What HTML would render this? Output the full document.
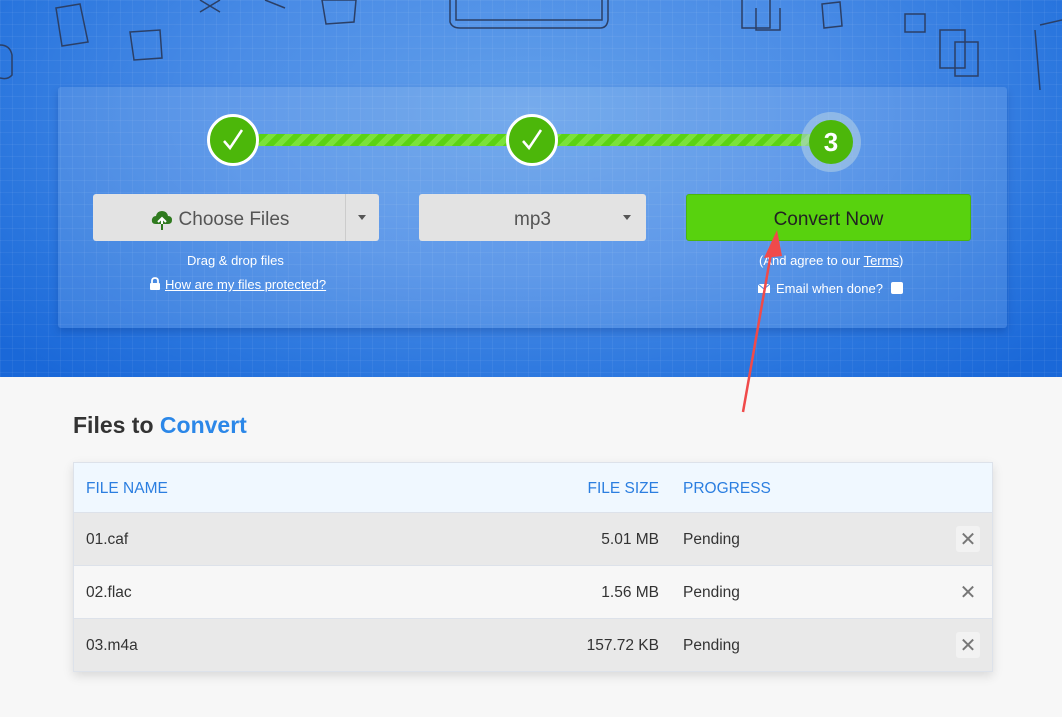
<!DOCTYPE html>
<html><head><meta charset="utf-8"><style>
*{margin:0;padding:0;box-sizing:border-box}
body{width:1062px;height:717px;overflow:hidden;background:#f7f7f7;font-family:"Liberation Sans",sans-serif;position:relative}
.hero{position:absolute;left:0;top:0;width:1062px;height:377px;background:radial-gradient(ellipse 700px 360px at 531px 110px,#63a0ea 0%,#4a8ce6 45%,#2a76de 78%,#1a68d8 100%)}
.grid{position:absolute;inset:0;background-image:linear-gradient(rgba(255,255,255,.05) 1px,transparent 1px),linear-gradient(90deg,rgba(255,255,255,.05) 1px,transparent 1px);background-size:12px 12px}
.panel{position:absolute;left:58px;top:87px;width:949px;height:241px;background:rgba(255,255,255,.12);border-radius:3px;box-shadow:0 4px 8px rgba(0,40,120,.25)}
.bar{position:absolute;top:134px;height:12px;background:repeating-linear-gradient(-45deg,#5bd214 0 6px,#7be23a 6px 12px)}
.circ{position:absolute;border-radius:50%;background:#4cb70a;color:#fff;display:flex;align-items:center;justify-content:center}
.btn{position:absolute;top:194px;height:47px;border-radius:3px;background:#e3e3e3;color:#555;font-size:19px;display:flex;align-items:center;justify-content:center;padding-top:4px}
.caret{width:0;height:0;border-left:4px solid transparent;border-right:4px solid transparent;border-top:5px solid #555;position:absolute}
.small{position:absolute;color:#fff;font-size:13px}
h2{position:absolute;left:73px;top:412px;font-size:23px;font-weight:bold;color:#333}
h2 span{color:#2b87e8}
.tbl{position:absolute;left:73px;top:462px;width:920px;border:1px solid #dde2ea;box-shadow:0 4px 10px rgba(0,0,0,.12)}
.row{height:53px;position:relative;border-top:1px solid #dde2ea;font-size:15.5px;color:#333}
.row div{position:absolute;top:1px;line-height:52px}
.hd{height:49px;background:#f0f8ff;border-top:none;color:#2b7ee0}
.hd div{line-height:49px}
.x{right:12px;top:13px!important;width:24px;height:26px;line-height:26px!important;text-align:center;color:#777;font-size:20px;border-radius:3px;font-family:"DejaVu Sans",sans-serif}
</style></head><body>
<div class="hero"><div class="grid"></div>
<svg width="1062" height="90" style="position:absolute;left:0;top:0" fill="none" stroke="#2b3f66" stroke-width="1.5">
<path d="M450 0 V22 Q452 28 460 28 H600 Q607 28 608 20 V0"/><path d="M456 0 V20 H602 V0"/>
<path d="M56 8 L80 4 L88 42 L62 46 Z"/><path d="M130 32 L160 30 L162 58 L134 60 Z"/><path d="M322 0 L356 0 L354 22 L326 24 Z"/>
<path d="M200 0 L220 12 M200 12 L220 0"/><path d="M265 0 L285 8"/>
<path d="M742 0 V28 H770 V0"/><path d="M756 8 V30 H780 V8"/><path d="M822 4 L840 2 L842 26 L824 28 Z"/>
<path d="M905 14 H925 V32 H905 Z"/><path d="M940 30 H965 V68 H940 Z"/><path d="M955 42 H978 V76 H955 Z"/>
<path d="M1040 25 L1062 20 M1035 30 L1040 90 M0 45 Q10 45 12 55 V75 Q8 80 0 78"/>
</svg>
<div class="panel"></div>
<div class="bar" style="left:255px;width:256px"></div>
<div class="bar" style="left:553px;width:260px"></div>
<div class="circ" style="left:207px;top:114px;width:52px;height:52px;border:3px solid #fff"><svg width="26" height="26" viewBox="0 0 26 26"><path d="M4 14 L10 21 L22 3" stroke="#fff" stroke-width="2.5" fill="none"/></svg></div>
<div class="circ" style="left:506px;top:114px;width:52px;height:52px;border:3px solid #fff"><svg width="26" height="26" viewBox="0 0 26 26"><path d="M4 14 L10 21 L22 3" stroke="#fff" stroke-width="2.5" fill="none"/></svg></div>
<div style="position:absolute;left:801px;top:112px;width:60px;height:60px;border-radius:50%;background:rgba(180,210,230,.55)"></div>
<div class="circ" style="left:809px;top:120px;width:44px;height:44px;font-size:26px;font-weight:bold">3</div>
<div class="btn" style="left:93px;width:286px"><div style="position:absolute;left:252px;top:0;bottom:0;border-left:1px solid #ccc"></div>
<span style="margin-right:32px;display:flex;align-items:center"><svg width="22" height="22" viewBox="0 0 22 22" style="margin-right:6px"><path d="M5 15 Q0 15 1 10 Q2 7 5 7 Q6 2 11 2 Q16 2 17 7 Q21 7 21 11 Q21 15 17 15 Z" fill="#2f7a1f"/><path d="M11 21 V10 M7 13 L11 9 L15 13" stroke="#fff" stroke-width="2" fill="none"/><path d="M11 21 V15" stroke="#2f7a1f" stroke-width="2"/></svg>Choose Files</span>
<div class="caret" style="left:265px;top:21px"></div></div>
<div class="btn" style="left:419px;width:227px">mp3<div class="caret" style="left:204px;top:21px"></div></div>
<div class="btn" style="left:686px;width:285px;background:#58d20e;border:1px solid #4cb50c;color:#222">Convert Now</div>
<div class="small" style="left:187px;top:253px">Drag &amp; drop files</div>
<div class="small" style="left:149px;top:277px"><svg width="12" height="13" viewBox="0 0 12 13" style="vertical-align:-1px;margin-right:4px"><path d="M3 6 V4 Q3 1 6 1 Q9 1 9 4 V6" stroke="#fff" stroke-width="1.8" fill="none"/><rect x="1" y="6" width="10" height="7" rx="1" fill="#fff"/></svg><u>How are my files protected?</u></div>
<div class="small" style="left:759px;top:253px">(And agree to our <u>Terms</u>)</div>
<div class="small" style="left:758px;top:281px"><svg width="12" height="11" viewBox="0 0 12 11" style="vertical-align:-1px;margin-right:6px"><rect x="0" y="1" width="12" height="9" fill="#fff"/><path d="M0 1 L6 6 L12 1" stroke="#4a8ce6" fill="none"/></svg>Email when done? <span style="display:inline-block;width:12px;height:12px;background:#fff;border-radius:2px;vertical-align:-1px;margin-left:4px"></span></div>
</div>
<h2>Files to <span>Convert</span></h2>
<div class="tbl">
<div class="row hd"><div style="left:12px">FILE NAME</div><div style="right:333px">FILE SIZE</div><div style="left:609px">PROGRESS</div></div>
<div class="row" style="background:#e9e9e9"><div style="left:12px">01.caf</div><div style="right:333px">5.01 MB</div><div style="left:609px">Pending</div><div class="x" style="background:#f2f2f2">✕</div></div>
<div class="row" style="background:#f7f7f7"><div style="left:12px">02.flac</div><div style="right:333px">1.56 MB</div><div style="left:609px">Pending</div><div class="x">✕</div></div>
<div class="row" style="background:#e9e9e9"><div style="left:12px">03.m4a</div><div style="right:333px">157.72 KB</div><div style="left:609px">Pending</div><div class="x" style="background:#f2f2f2">✕</div></div>
</div>
<svg width="1062" height="717" style="position:absolute;left:0;top:0"><path d="M743 412 L773 242" stroke="#f04a4a" stroke-width="2.5"/><path d="M777 230 L764 258 L782 256 Z" fill="#f04a4a"/></svg>
</body></html>
